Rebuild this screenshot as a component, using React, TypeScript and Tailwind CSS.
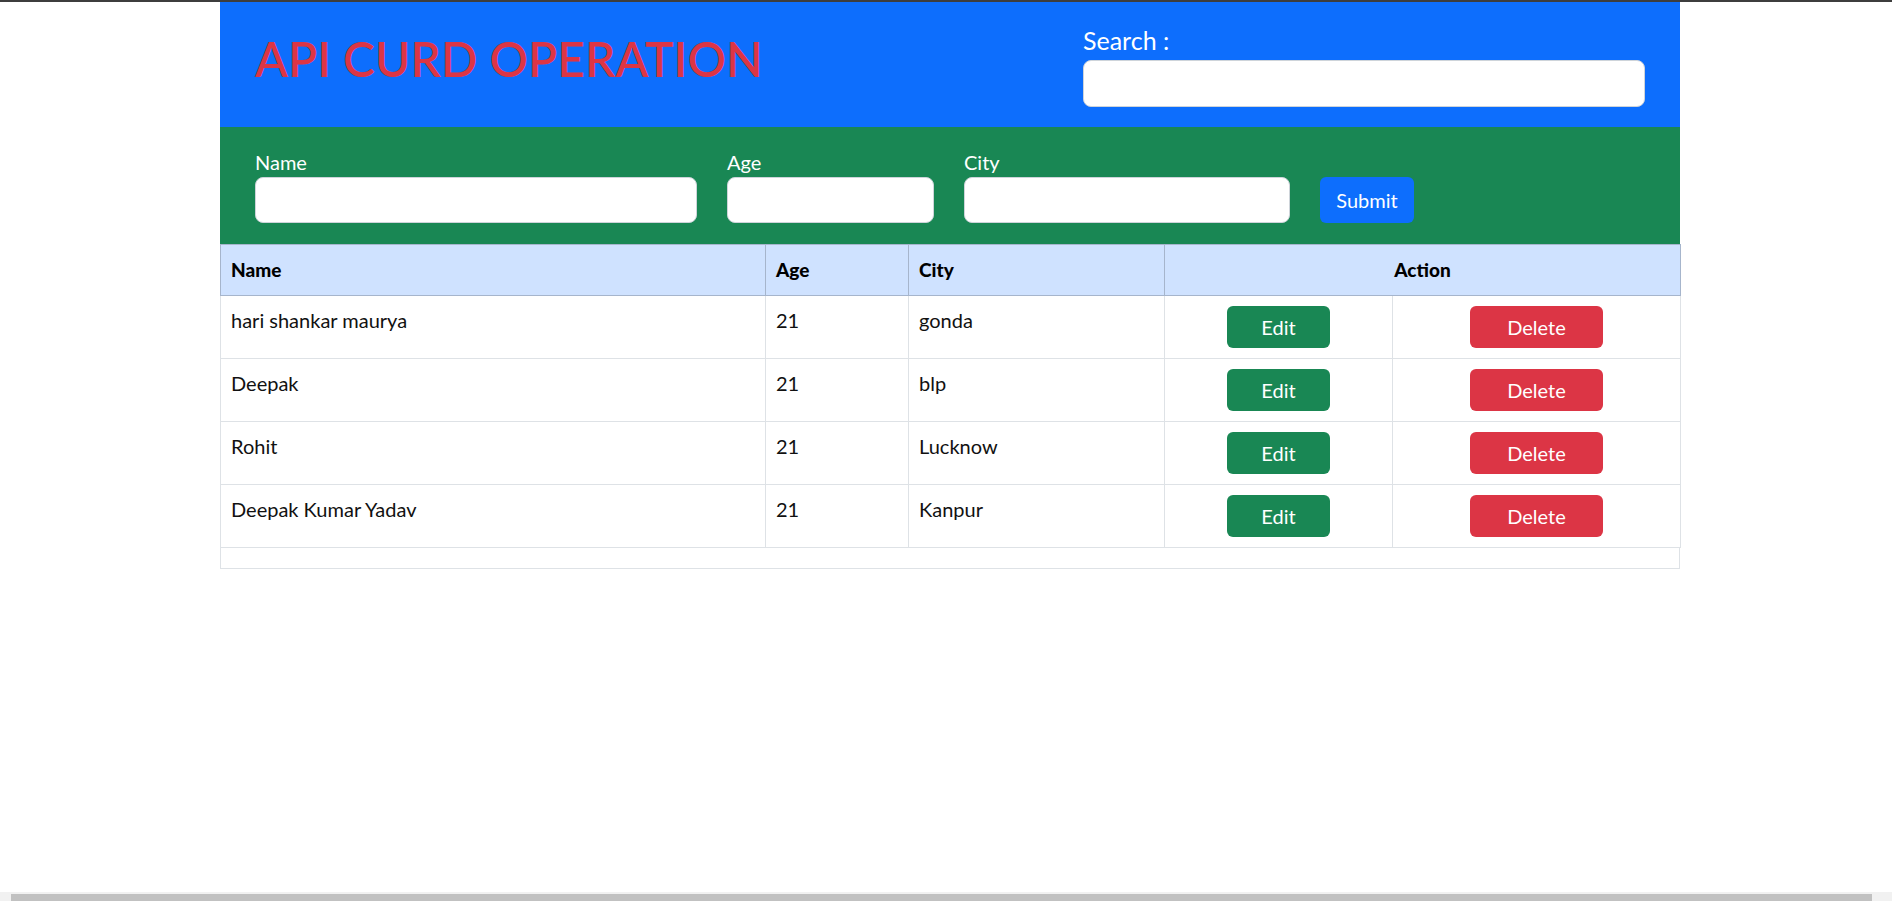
import React from "react";

const rows = [
  { name: "hari shankar maurya", age: "21", city: "gonda" },
  { name: "Deepak", age: "21", city: "blp" },
  { name: "Rohit", age: "21", city: "Lucknow" },
  { name: "Deepak Kumar Yadav", age: "21", city: "Kanpur" },
];

export default function App() {
  return (
    <div className="min-h-screen bg-white font-['Lato','Liberation_Sans',sans-serif]">
      <div className="h-[2px] bg-[#3d3d3d]" />
      <div className="ml-[220px] w-[1460px]">
        {/* Blue header */}
        <div className="flex h-[125px] bg-[#0d6efd] px-[35px]">
          <h1 className="pt-[28px] text-[48px] leading-[1.2] font-semibold text-[#dc3545]">
            API CURD OPERATION
          </h1>
          <div className="ml-auto w-[562px] pt-[23px]">
            <label className="block text-[25px] leading-[30px] text-white">Search :</label>
            <input className="mt-[5px] h-[47px] w-full rounded-lg border border-[#ced4da] bg-white outline-none" />
          </div>
        </div>

        {/* Green form */}
        <div className="flex h-[117px] items-start gap-[30px] bg-[#198754] px-[35px] pt-[23px]">
          <div className="flex w-[442px] flex-col">
            <label className="text-[20px] leading-[24px] text-white">Name</label>
            <input className="mt-[3px] h-[46px] w-full rounded-lg border border-[#ced4da] bg-white outline-none" />
          </div>
          <div className="flex w-[207px] flex-col">
            <label className="text-[20px] leading-[24px] text-white">Age</label>
            <input className="mt-[3px] h-[46px] w-full rounded-lg border border-[#ced4da] bg-white outline-none" />
          </div>
          <div className="flex w-[326px] flex-col">
            <label className="text-[20px] leading-[24px] text-white">City</label>
            <input className="mt-[3px] h-[46px] w-full rounded-lg border border-[#ced4da] bg-white outline-none" />
          </div>
          <button className="mt-[27px] h-[46px] w-[94px] rounded-md bg-[#0d6efd] text-[20px] text-white">
            Submit
          </button>
        </div>

        {/* Table */}
        <table className="w-full table-fixed border-collapse">
          <colgroup>
            <col className="w-[545px]" />
            <col className="w-[143px]" />
            <col className="w-[256px]" />
            <col className="w-[228px]" />
            <col className="w-[288px]" />
          </colgroup>
          <thead>
            <tr>
              <th className="h-[51px] border border-[#a6b5cc] bg-[#cfe2ff] px-[10px] text-left align-middle text-[19px] font-black text-black">
                Name
              </th>
              <th className="h-[51px] border border-[#a6b5cc] bg-[#cfe2ff] px-[10px] text-left align-middle text-[19px] font-black text-black">
                Age
              </th>
              <th className="h-[51px] border border-[#a6b5cc] bg-[#cfe2ff] px-[10px] text-left align-middle text-[19px] font-black text-black">
                City
              </th>
              <th
                colSpan={2}
                className="h-[51px] border border-[#a6b5cc] bg-[#cfe2ff] px-[10px] text-center align-middle text-[19px] font-black text-black"
              >
                Action
              </th>
            </tr>
          </thead>
          <tbody>
            {rows.map((r, i) => (
              <tr key={i}>
                <td className="h-[63px] border border-[#dee2e6] px-[10px] pt-[12px] align-top text-[20px] leading-[24px] text-[#111]">
                  {r.name}
                </td>
                <td className="h-[63px] border border-[#dee2e6] px-[10px] pt-[12px] align-top text-[20px] leading-[24px] text-[#111]">
                  {r.age}
                </td>
                <td className="h-[63px] border border-[#dee2e6] px-[10px] pt-[12px] align-top text-[20px] leading-[24px] text-[#111]">
                  {r.city}
                </td>
                <td className="h-[63px] border border-[#dee2e6] pt-[10px] text-center align-top">
                  <button className="h-[42px] w-[103px] rounded-md bg-[#198754] text-[20px] text-white">
                    Edit
                  </button>
                </td>
                <td className="h-[63px] border border-[#dee2e6] pt-[10px] text-center align-top">
                  <button className="h-[42px] w-[133px] rounded-md bg-[#dc3545] text-[20px] text-white">
                    Delete
                  </button>
                </td>
              </tr>
            ))}
          </tbody>
        </table>
        <div className="h-[21px] border-x border-b border-[#dee2e6]" />
      </div>

      {/* horizontal scrollbar */}
      <div className="fixed bottom-0 left-0 right-0 h-[9px] bg-[#f1f1f1]">
        <div className="ml-[11px] mr-[20px] mt-[2px] h-[7px] bg-[#c1c1c1]" />
      </div>
    </div>
  );
}
